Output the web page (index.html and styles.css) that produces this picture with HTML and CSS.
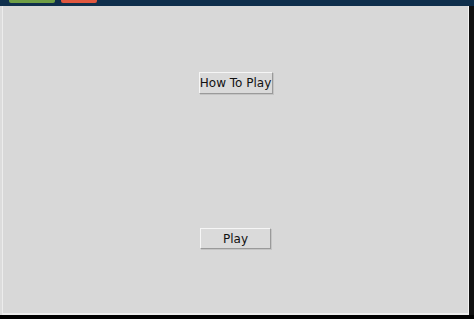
FILE: index.html
```html
<!DOCTYPE html>
<html lang="en">
  <head>
    <meta charset="UTF-8" />
    <title>Game Menu</title>
    <link rel="stylesheet" href="styles.css">
  </head>
  <body>
    <div class="screen">
      <!-- title bar with the two tabs -->
      <div class="topbar">
        <span class="tab tab-green"></span>
        <span class="tab tab-red"></span>
      </div>
      <div class="middle">
        <div class="window">
          <div class="menu">
            <button class="btn how-btn">How To Play</button>
            <button class="btn play-btn">Play</button>
          </div>
        </div>
        <div class="side"></div>
      </div>
      <div class="bottom"></div>
    </div>
  </body>
</html>
```

FILE: styles.css
```css
body {
  margin: 0;
  padding: 0;
  background-color: #000;
  font-family: "DejaVu Sans", sans-serif;
}

.screen {
  width: 474px;
  height: 319px;
  display: flex;
  flex-direction: column;
  overflow: hidden;
}

.topbar {
  height: 6px;
  background-color: #0f2f4c;
  display: flex;
  align-items: flex-start;
  padding-left: 9px;
  gap: 6px;
}

.tab {
  height: 3px;
  border-radius: 0 0 2px 2px;
}

.tab-green {
  width: 46px;
  background-color: #6f9e45;
}

.tab-red {
  width: 36px;
  background-color: #e0573f;
}

.middle {
  flex: 1;
  display: flex;
  background-color: #dcdcdc;
}

.window {
  flex: 1;
  margin-left: 2px;
  background-color: #d8d8d8;
  border-left: 1px solid #ececec;
  border-bottom: 2px solid #ececec;
  border-right: 1px solid #f2f2f2;
}

.side {
  width: 5px;
  background-color: #111;
}

.bottom {
  height: 4px;
  background-color: #000;
}

.menu {
  display: flex;
  flex-direction: column;
  align-items: center;
  padding-top: 66px;
}

/* tk style raised buttons */
.btn {
  font-family: "DejaVu Sans", sans-serif;
  font-size: 12px;
  white-space: nowrap;
  color: #111;
  background-color: #dadada;
  border: 1px solid;
  border-color: #f6f6f6 #9a9a9a #9a9a9a #f6f6f6;
  box-shadow: 1px 1px 0 #c4c4c4;
  padding: 0;
  margin: 0;
}

.how-btn {
  width: 74px;
  height: 22px;
}

.play-btn {
  width: 71px;
  height: 21px;
  margin-top: 134px;
}
```
